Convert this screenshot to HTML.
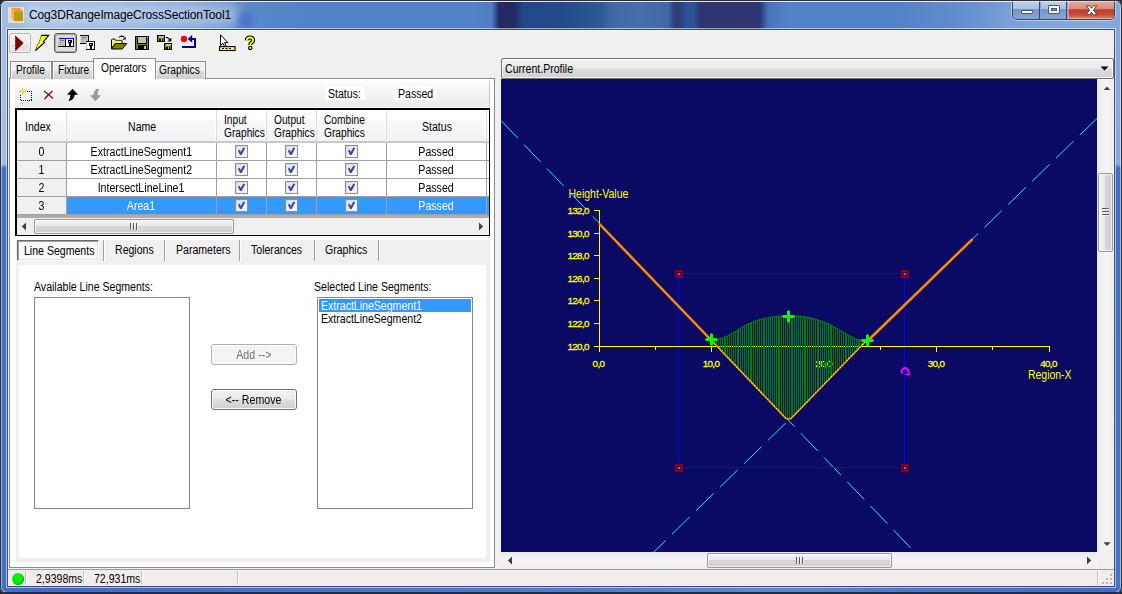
<!DOCTYPE html>
<html>
<head>
<meta charset="utf-8">
<title>Cog3DRangeImageCrossSectionTool1</title>
<style>
*{box-sizing:border-box;margin:0;padding:0}
html,body{width:1122px;height:594px;overflow:hidden}
body{position:relative;font-family:"Liberation Sans",sans-serif;font-size:11px;color:#000;background:#25272c}
.abs{position:absolute}
.t{position:absolute;white-space:nowrap;line-height:13px;font-size:12px;transform:translateY(1px) scaleX(.88);transform-origin:0 50%}
.t.n{transform:translateY(1px) scaleX(.85)}
.s{display:inline-block;font-size:12px;transform:scaleX(.885);transform-origin:50% 50%;white-space:nowrap}
#frame{left:0;top:0;width:1122px;height:594px;border-radius:7px;overflow:hidden;background:#4377c3}
#titlebar{left:0;top:0;width:1122px;height:30px}
#client{left:8px;top:30px;width:1106px;height:556px;background:#f0f0f0}
.tab{position:absolute;border:1px solid #898c95;border-bottom:none;background:linear-gradient(#f2f2f2 0%,#ebebeb 50%,#dddddd 51%,#cfcfcf 100%);box-shadow:inset 1px 1px 0 rgba(255,255,255,.8),inset -1px 0 0 rgba(255,255,255,.8);height:18px;top:61px}
.tab.sel{background:#fff;top:58px;height:21px;z-index:3;box-shadow:none}
.hc{position:absolute;top:110px;height:33px;background:linear-gradient(#ffffff 0%,#ffffff 30%,#f7f8fa 33%,#f1f2f5 100%);border-right:1px solid #dcdde0;border-bottom:2px solid #c9c9c9;box-shadow:inset -1px 0 0 #fff}
.cell{position:absolute;height:18px;border-right:1px solid #a0a0a0;border-bottom:1px solid #a0a0a0;background:#fff;text-align:center;line-height:18px;white-space:nowrap}
.cell.rh{background:#f0f0f0}
.cell.sel{background:#3399ff;color:#fff}
.cb{position:absolute;width:13px;height:13px;border:1px solid #8e8f8f;background:linear-gradient(135deg,#ccd1db 0%,#e4e7ec 50%,#f8f9fa 100%)}
.cb:before{content:"";position:absolute;left:1px;top:1px;right:1px;bottom:1px;border:1px solid rgba(255,255,255,.55)}
.lb{position:absolute;border:1px solid #828790;background:#fff}
.btn{position:absolute;border:1px solid #707070;border-radius:3px;background:linear-gradient(#f2f2f2 0%,#ebebeb 48%,#dddddd 52%,#cfcfcf 100%);box-shadow:inset 0 0 0 1px #fcfcfc;text-align:center;line-height:19px;white-space:nowrap}
.sep{position:absolute;width:1px;background:#a0a0a0;box-shadow:1px 0 0 #fff}
</style>
</head>
<body>
<div id="frame" class="abs">
<div id="titlebar" class="abs">
<div class="abs" style="left:0;top:0;width:1122px;height:30px;background:linear-gradient(90deg,#a4bfe4 0px,#9dbae2 20px,#8fb0de 120px,#7a9fd8 200px,#5a88cc 245px,#5482c8 300px,#5482c8 470px,#4f7cc2 492px,#232a63 499px,#222a64 514px,#23478a 524px,#234a8b 560px,#2d5893 600px,#4169a8 612px,#456eac 640px,#4169a8 668px,#333f7d 674px,#2f3c7a 680px,#2a5297 686px,#2a5297 694px,#2e3570 700px,#2e3570 760px,#4873ba 768px,#5482c8 790px,#5482c8 900px,#628dcf 960px,#7a9fd8 1010px,#84a6da 1060px,#86a7da 1122px)"></div>
<div class="abs" style="left:0;top:0;width:1122px;height:1px;background:#2b2f3a"></div>
<div class="abs" style="left:1px;top:1px;width:1120px;height:1px;background:rgba(255,255,255,.75)"></div>
<div class="abs" style="left:20px;top:4px;width:220px;height:22px;border-radius:11px;background:rgba(255,255,255,.36);filter:blur(6px)"></div>
<div class="abs" style="left:238px;top:12px;width:14px;height:16px;border-radius:7px;background:rgba(58,92,200,.55);filter:blur(3px)"></div>
<svg class="abs" style="left:8px;top:7px" width="16" height="16" viewBox="0 0 16 16"><rect width="16" height="16" fill="#e2ded9"/><polygon points="3,1 12,1 15,4.3 6,4.3" fill="#ff9a28"/><polygon points="3,1 6,4.3 6,14 3,11" fill="#ffb45a"/><rect x="6" y="4.3" width="9" height="9.7" fill="#e8820c"/><polyline points="6.3,12.6 9.6,6.6 13.5,6.6 13.5,12.6 15.2,12.6" fill="none" stroke="#10f020" stroke-width="1.3"/></svg>
<div class="t" style="left:29px;top:7px;font-size:12px;line-height:16px;letter-spacing:-0.13px;color:#000;transform:none" id="ttl">Cog3DRangeImageCrossSectionTool1</div>
<div class="abs" style="left:1012px;top:0;width:103px;height:20px;border:1px solid #3a4660;border-top:none;border-radius:0 0 5px 5px;overflow:hidden;box-shadow:0 0 0 1px rgba(255,255,255,.45)">
 <div class="abs" style="left:0;top:0;width:27px;height:19px;background:linear-gradient(#c3d4ec 0%,#a9c0e2 45%,#7395c9 50%,#86a6d6 100%);border-right:1px solid #3a4660"></div>
 <div class="abs" style="left:28px;top:0;width:26px;height:19px;background:linear-gradient(#c3d4ec 0%,#a9c0e2 45%,#7395c9 50%,#86a6d6 100%);border-right:1px solid #3a4660"></div>
 <div class="abs" style="left:55px;top:0;width:47px;height:19px;background:linear-gradient(#e8b0a6 0%,#d98c7e 45%,#c43c26 52%,#c64a34 75%,#d48874 100%);box-shadow:inset 0 0 0 1px rgba(255,255,255,.35)"></div>
 <div class="abs" style="left:8px;top:10px;width:12px;height:4px;background:#fff;border:1px solid #4a5570;border-radius:1px"></div>
 <div class="abs" style="left:35px;top:5px;width:12px;height:9px;background:#fff;border:1px solid #4a5570;border-radius:1px"></div>
 <div class="abs" style="left:38px;top:8px;width:6px;height:3px;background:#7f9dcc;border:1px solid #4a5570"></div>
 <svg class="abs" style="left:72px;top:5px" width="13" height="11" viewBox="0 0 13 11"><path d="M1.2,0.8 L4.6,0.8 L6.5,3.2 L8.4,0.8 L11.8,0.8 L8.4,5.2 L12,9.8 L8.4,9.8 L6.5,7.2 L4.6,9.8 L1,9.8 L4.6,5.2 Z" fill="#fff" stroke="#4a4050" stroke-width="1"/></svg>
</div>
</div>
<div id="client" class="abs"></div>
<div class="abs" style="left:9px;top:33px;width:22px;height:20px;border:1px solid #b4b4b4;border-radius:3px;background:linear-gradient(#f4f4f4 0%,#ececec 58%,#dfdfdf 62%,#e6e6e6 100%);box-shadow:inset 0 0 0 1px rgba(255,255,255,.6)"></div>
<svg class="abs" style="left:14px;top:35px" width="10" height="17" viewBox="0 0 10 17"><polygon points="1,0.2 9.3,7.7 1,15.8" fill="#800000"/><line x1="1" y1="0" x2="1" y2="16" stroke="#e8c0c0" stroke-width="1" stroke-dasharray="1 1"/><line x1="9.3" y1="8" x2="1.2" y2="16" stroke="#200000" stroke-width="0.9"/></svg>
<svg class="abs" style="left:34px;top:34px" width="16" height="18" viewBox="0 0 16 18"><polygon points="7.4,1.3 14.6,1.3 9.6,7.6 10.6,8.4 1.4,16.6 3.6,10.2 4.8,9.6" fill="#ffff00"/><path d="M7.4,1.3 H14.6 L9.6,7.6 L10.6,8.4 L1.4,16.6" fill="none" stroke="#000" stroke-width="1.2"/><path d="M1.4,16.6 L3.6,10.2 L4.8,9.6 L7.4,1.3" fill="none" stroke="#000" stroke-width="0.9" stroke-dasharray="1.2 1"/></svg>
<div class="abs" style="left:54px;top:33px;width:23px;height:20px;border:1px solid #5c5c5c;border-radius:3px;background:linear-gradient(#d6d6d6 0%,#dcdcdc 50%,#d8d8d8 55%,#e4e4e4 100%);box-shadow:inset 0 0 0 1px #a8a8a8"></div>
<svg class="abs" style="left:58px;top:38px" width="16" height="10" viewBox="0 0 16 10" shape-rendering="crispEdges"><rect x="1" y="1" width="14" height="7" fill="#fff"/><rect x="1" y="1" width="6" height="7" fill="#c0c0c0"/><rect x="1" y="0" width="7" height="1" fill="#000080"/><rect x="8" y="0" width="7" height="1" fill="#0000ff"/><rect x="0" y="1" width="1" height="7" fill="#d0d0d0"/><rect x="0" y="8" width="16" height="1" fill="#000"/><rect x="15" y="0" width="1" height="9" fill="#000"/><rect x="7" y="1" width="1" height="8" fill="#000"/><rect x="2" y="2" width="4" height="1" fill="#808080"/><rect x="2" y="4" width="1" height="1" fill="#808080"/><rect x="2" y="6" width="1" height="1" fill="#808080"/><rect x="10" y="2" width="4" height="3" fill="#000"/><rect x="11" y="5" width="2" height="3" fill="#000"/><rect x="11" y="3" width="1" height="1" fill="#fff"/></svg>
<svg class="abs" style="left:80px;top:35px" width="16" height="16" viewBox="0 0 16 16" shape-rendering="crispEdges"><rect x="1" y="1" width="7" height="7" fill="#c0c0c0"/><rect x="0" y="0" width="8" height="1" fill="#000080"/><rect x="0" y="1" width="1" height="7" fill="#d8d8d8"/><rect x="8" y="0" width="1" height="9" fill="#000"/><rect x="0" y="8" width="9" height="1" fill="#000"/><rect x="2" y="2" width="4" height="1" fill="#808080"/><rect x="2" y="4" width="1" height="1" fill="#808080"/><rect x="2" y="6" width="1" height="1" fill="#808080"/><rect x="6" y="6" width="9" height="9" fill="#fff"/><rect x="6" y="6" width="9" height="1" fill="#0000ff"/><rect x="6" y="7" width="1" height="7" fill="#c0c0c0"/><rect x="14" y="6" width="1" height="9" fill="#000"/><rect x="6" y="14" width="9" height="1" fill="#000"/><rect x="9" y="8" width="4" height="3" fill="#000"/><rect x="10" y="11" width="2" height="3" fill="#000"/><rect x="10" y="9" width="1" height="1" fill="#fff"/></svg>
<svg class="abs" style="left:110px;top:34px" width="18" height="16" viewBox="0 0 18 16"><path d="M9,3.4 Q11.5,0.8 14.2,3.2" fill="none" stroke="#000" stroke-width="1.1"/><polygon points="12.6,5.8 15.8,5.6 15.4,2.4" fill="#000"/><polygon points="1.5,15 1.5,5.8 2.3,5 4.8,5 5.6,6.4 12,6.4 12,9.5 5,9.5" fill="#f4f4a0" stroke="#000" stroke-width="1" stroke-linejoin="round"/><path d="M2.5,7 h9 M2.5,8.5 h3 M2.5,10 h2 M2.5,11.5 h1.2" stroke="#e8e800" stroke-width="1" stroke-dasharray="1 1"/><polygon points="1.5,15 5.5,9.5 16.8,9.5 12.3,15" fill="#808000" stroke="#000" stroke-width="1" stroke-linejoin="round"/></svg>
<svg class="abs" style="left:135px;top:36px" width="14" height="14" viewBox="0 0 14 14" shape-rendering="crispEdges"><rect x="0" y="0" width="14" height="14" fill="#000"/><rect x="1" y="1" width="12" height="12" fill="#808000"/><rect x="3" y="1" width="8" height="6" fill="#c0c0c0"/><rect x="2" y="1" width="1" height="7" fill="#000"/><rect x="11" y="1" width="1" height="7" fill="#000"/><rect x="3" y="7" width="8" height="1" fill="#000"/><rect x="12" y="1" width="1" height="1" fill="#e0e0e0"/><rect x="3" y="9" width="9" height="4" fill="#000"/><rect x="9" y="10" width="2" height="3" fill="#c0c0c0"/></svg>
<svg class="abs" style="left:156px;top:34px" width="17" height="17" viewBox="0 0 17 17" shape-rendering="crispEdges"><rect x="1" y="1" width="8" height="7" fill="#000"/><rect x="2" y="2" width="6" height="5" fill="#808000"/><rect x="3" y="2" width="4" height="2" fill="#c0c0c0"/><rect x="7" y="2" width="1" height="1" fill="#e0e0e0"/><rect x="3" y="5" width="4" height="2" fill="#000"/><rect x="5" y="5" width="1" height="2" fill="#c0c0c0"/><rect x="8" y="9" width="8" height="7" fill="#000"/><rect x="9" y="10" width="6" height="5" fill="#808000"/><rect x="10" y="10" width="4" height="2" fill="#c0c0c0"/><rect x="14" y="10" width="1" height="1" fill="#e0e0e0"/><rect x="10" y="13" width="4" height="2" fill="#000"/><rect x="12" y="13" width="1" height="2" fill="#c0c0c0"/><path d="M10,3.5 h1.5 l3,3 M14.8,4 v3 h-3" fill="none" stroke="#000" stroke-width="1.1" shape-rendering="auto"/></svg>
<svg class="abs" style="left:180px;top:34px" width="18" height="17" viewBox="0 0 18 17"><circle cx="4" cy="5" r="3.15" fill="#ff0000"/><polygon points="7.8,5 12.2,0.8 12.2,8.8" fill="#000090"/><path d="M12,5 H15 V13 H2" fill="none" stroke="#000090" stroke-width="2"/></svg>
<svg class="abs" style="left:218px;top:34px" width="18" height="18" viewBox="0 0 18 18"><polygon points="2.5,0.8 2.5,11.5 5,9.3 6.8,13 8.3,12.3 6.6,8.7 9.8,8.5" fill="#fff" stroke="#000" stroke-width="1"/><rect x="1.5" y="12.6" width="15.5" height="3.9" fill="#ffff00" stroke="#000" stroke-width="1.1"/><path d="M4,14.5 h2 M7.5,14.5 h2 M11,14.5 h2" stroke="#000" stroke-width="1"/></svg>
<svg class="abs" style="left:244px;top:35px" width="12" height="16" viewBox="0 0 13 18"><path d="M3,6 Q3,2.8 6.5,2.8 Q10,2.8 10,5.8 Q10,7.6 8,8.6 Q6.8,9.3 6.8,11.2" fill="none" stroke="#000" stroke-width="4.6" stroke-linecap="butt"/><path d="M3,6 Q3,2.8 6.5,2.8 Q10,2.8 10,5.8 Q10,7.6 8,8.6 Q6.8,9.3 6.8,11.2" fill="none" stroke="#ffff00" stroke-width="2"/><circle cx="6.8" cy="14.6" r="1.9" fill="#ffff00" stroke="#000" stroke-width="1.3"/></svg>
<div class="abs" style="left:9px;top:78px;width:486px;height:490px;border:1px solid #898c95;background:#fff"></div>
<div class="tab" style="left:10px;width:42px"></div><div class="t n" style="left:16px;top:63px">Profile</div>
<div class="tab" style="left:52px;width:42px"></div><div class="t n" style="left:58px;top:63px">Fixture</div>
<div class="tab" style="left:155px;width:51px"></div><div class="t n" style="left:159px;top:63px">Graphics</div>
<div class="tab sel" style="left:93px;width:63px"></div><div class="t n" style="left:101px;top:61px;z-index:4">Operators</div>
<div class="abs" style="left:15px;top:81px;width:475px;height:26px;border-radius:3px 0 0 0;background:linear-gradient(#fdfdfd 0%,#f4f4f4 40%,#ebebeb 100%);border-right:1px solid #c8c8c8"></div>
<svg class="abs" style="left:19px;top:88px" width="15" height="14" viewBox="0 0 15 14" shape-rendering="crispEdges"><path d="M1.5,3.5 H12.5 V12.5 H1.5 Z" fill="none" stroke="#000" stroke-width="1" stroke-dasharray="1 1"/><rect x="0" y="1" width="6" height="5" fill="#f6f6f6"/><path d="M1,1.5 l4,4 M5,1.5 l-4,4 M3.5,0 v7 M0,3.5 h7" stroke="#d8d800" stroke-width="1" shape-rendering="auto"/><rect x="3" y="3" width="1" height="1" fill="#fff"/></svg>
<svg class="abs" style="left:43px;top:90px" width="11" height="10" viewBox="0 0 11 10"><path d="M1,1 Q5,4 10,8.5 M9.5,1 Q5,5 1.5,9" fill="none" stroke="#8b1414" stroke-width="1.5"/></svg>
<svg class="abs" style="left:66px;top:88px" width="13" height="14" viewBox="0 0 13 14"><path d="M6.5,0.8 L12,6.8 L8.6,6.8 Q8.6,11 4,12.8 L2.5,12.8 Q4.6,10 4.4,6.8 L1,6.8 Z" fill="#000"/></svg>
<svg class="abs" style="left:89px;top:88px" width="13" height="14" viewBox="0 0 13 14"><path d="M6.5,13.2 L12,7.2 L8.6,7.2 Q8.6,3 10.2,1 L7.5,1 Q4.4,3.4 4.4,7.2 L1,7.2 Z" fill="#9a9a9a"/></svg>
<div class="abs" style="left:325px;top:87px;width:40px;height:13px;background:#fff"></div><div class="t" style="left:328px;top:87px">Status:</div>
<div class="abs" style="left:395px;top:87px;width:42px;height:13px;background:#fff"></div><div class="t" style="left:398px;top:87px">Passed</div>
<div class="abs" style="left:15px;top:108px;width:475px;height:128px;border:solid #000;border-width:2px 1px 1px 2px;background:#ababab"></div>
<div class="hc" style="left:17px;width:50px"></div>
<div class="hc" style="left:67px;width:150px"></div>
<div class="hc" style="left:217px;width:50px"></div>
<div class="hc" style="left:267px;width:50px"></div>
<div class="hc" style="left:317px;width:70px"></div>
<div class="hc" style="left:387px;width:100px"></div>
<div class="hc" style="left:487px;width:2px;border-right:none"></div>
<div class="t" style="left:25px;top:120px">Index</div>
<div class="t" style="left:128px;top:120px">Name</div>
<div class="t n" style="left:224px;top:113px">Input<br>Graphics</div>
<div class="t n" style="left:274px;top:113px">Output<br>Graphics</div>
<div class="t n" style="left:323.5px;top:113px">Combine<br>Graphics</div>
<div class="t" style="left:422px;top:120px">Status</div>
<div class="cell rh" style="left:17px;top:143px;width:50px"><span class="s">0</span></div>
<div class="cell" style="left:67px;top:143px;width:150px"><span class="s">ExtractLineSegment1</span></div>
<div class="cell" style="left:217px;top:143px;width:50px"></div>
<div class="cb" style="left:235px;top:145px"></div><svg class="abs" style="left:237px;top:147px" width="9" height="9" viewBox="0 0 9 9"><path d="M0.8,3.6 L3.1,8 L4.6,8 L8.3,0.9 L6.4,0.4 L3.8,5 L2.7,2.9 Z" fill="#3848a0"/></svg>
<div class="cell" style="left:267px;top:143px;width:50px"></div>
<div class="cb" style="left:285px;top:145px"></div><svg class="abs" style="left:287px;top:147px" width="9" height="9" viewBox="0 0 9 9"><path d="M0.8,3.6 L3.1,8 L4.6,8 L8.3,0.9 L6.4,0.4 L3.8,5 L2.7,2.9 Z" fill="#3848a0"/></svg>
<div class="cell" style="left:317px;top:143px;width:70px"></div>
<div class="cb" style="left:345px;top:145px"></div><svg class="abs" style="left:347px;top:147px" width="9" height="9" viewBox="0 0 9 9"><path d="M0.8,3.6 L3.1,8 L4.6,8 L8.3,0.9 L6.4,0.4 L3.8,5 L2.7,2.9 Z" fill="#3848a0"/></svg>
<div class="cell" style="left:387px;top:143px;width:100px"><span class="s">Passed</span></div>
<div class="cell" style="left:487px;top:143px;width:2px;border-right:none"></div>
<div class="cell rh" style="left:17px;top:161px;width:50px"><span class="s">1</span></div>
<div class="cell" style="left:67px;top:161px;width:150px"><span class="s">ExtractLineSegment2</span></div>
<div class="cell" style="left:217px;top:161px;width:50px"></div>
<div class="cb" style="left:235px;top:163px"></div><svg class="abs" style="left:237px;top:165px" width="9" height="9" viewBox="0 0 9 9"><path d="M0.8,3.6 L3.1,8 L4.6,8 L8.3,0.9 L6.4,0.4 L3.8,5 L2.7,2.9 Z" fill="#3848a0"/></svg>
<div class="cell" style="left:267px;top:161px;width:50px"></div>
<div class="cb" style="left:285px;top:163px"></div><svg class="abs" style="left:287px;top:165px" width="9" height="9" viewBox="0 0 9 9"><path d="M0.8,3.6 L3.1,8 L4.6,8 L8.3,0.9 L6.4,0.4 L3.8,5 L2.7,2.9 Z" fill="#3848a0"/></svg>
<div class="cell" style="left:317px;top:161px;width:70px"></div>
<div class="cb" style="left:345px;top:163px"></div><svg class="abs" style="left:347px;top:165px" width="9" height="9" viewBox="0 0 9 9"><path d="M0.8,3.6 L3.1,8 L4.6,8 L8.3,0.9 L6.4,0.4 L3.8,5 L2.7,2.9 Z" fill="#3848a0"/></svg>
<div class="cell" style="left:387px;top:161px;width:100px"><span class="s">Passed</span></div>
<div class="cell" style="left:487px;top:161px;width:2px;border-right:none"></div>
<div class="cell rh" style="left:17px;top:179px;width:50px"><span class="s">2</span></div>
<div class="cell" style="left:67px;top:179px;width:150px"><span class="s">IntersectLineLine1</span></div>
<div class="cell" style="left:217px;top:179px;width:50px"></div>
<div class="cb" style="left:235px;top:181px"></div><svg class="abs" style="left:237px;top:183px" width="9" height="9" viewBox="0 0 9 9"><path d="M0.8,3.6 L3.1,8 L4.6,8 L8.3,0.9 L6.4,0.4 L3.8,5 L2.7,2.9 Z" fill="#3848a0"/></svg>
<div class="cell" style="left:267px;top:179px;width:50px"></div>
<div class="cb" style="left:285px;top:181px"></div><svg class="abs" style="left:287px;top:183px" width="9" height="9" viewBox="0 0 9 9"><path d="M0.8,3.6 L3.1,8 L4.6,8 L8.3,0.9 L6.4,0.4 L3.8,5 L2.7,2.9 Z" fill="#3848a0"/></svg>
<div class="cell" style="left:317px;top:179px;width:70px"></div>
<div class="cb" style="left:345px;top:181px"></div><svg class="abs" style="left:347px;top:183px" width="9" height="9" viewBox="0 0 9 9"><path d="M0.8,3.6 L3.1,8 L4.6,8 L8.3,0.9 L6.4,0.4 L3.8,5 L2.7,2.9 Z" fill="#3848a0"/></svg>
<div class="cell" style="left:387px;top:179px;width:100px"><span class="s">Passed</span></div>
<div class="cell" style="left:487px;top:179px;width:2px;border-right:none"></div>
<div class="cell rh" style="left:17px;top:197px;width:50px"><span class="s">3</span></div>
<div class="cell sel" style="left:67px;top:197px;width:150px"><span class="s">Area1</span></div>
<div class="cell sel" style="left:217px;top:197px;width:50px"></div>
<div class="cb" style="left:235px;top:199px"></div><svg class="abs" style="left:237px;top:201px" width="9" height="9" viewBox="0 0 9 9"><path d="M0.8,3.6 L3.1,8 L4.6,8 L8.3,0.9 L6.4,0.4 L3.8,5 L2.7,2.9 Z" fill="#3848a0"/></svg>
<div class="cell sel" style="left:267px;top:197px;width:50px"></div>
<div class="cb" style="left:285px;top:199px"></div><svg class="abs" style="left:287px;top:201px" width="9" height="9" viewBox="0 0 9 9"><path d="M0.8,3.6 L3.1,8 L4.6,8 L8.3,0.9 L6.4,0.4 L3.8,5 L2.7,2.9 Z" fill="#3848a0"/></svg>
<div class="cell sel" style="left:317px;top:197px;width:70px"></div>
<div class="cb" style="left:345px;top:199px"></div><svg class="abs" style="left:347px;top:201px" width="9" height="9" viewBox="0 0 9 9"><path d="M0.8,3.6 L3.1,8 L4.6,8 L8.3,0.9 L6.4,0.4 L3.8,5 L2.7,2.9 Z" fill="#3848a0"/></svg>
<div class="cell sel" style="left:387px;top:197px;width:100px"><span class="s">Passed</span></div>
<div class="cell sel" style="left:487px;top:197px;width:2px;border-right:none"></div>
<div class="abs" style="left:17px;top:218px;width:472px;height:17px;background:#f0f0f0"></div>
<div class="abs" style="left:34px;top:219px;width:200px;height:15px;border:1px solid #979797;border-radius:2px;background:linear-gradient(#f3f3f3 0%,#e9e9eb 45%,#d7d7d9 50%,#d0d0d2 100%);box-shadow:inset 0 0 0 1px rgba(255,255,255,.7)"></div>
<div class="abs" style="left:129.5px;top:223px;width:1.3px;height:7px;background:linear-gradient(#3a3a3a,#7a7a7a);box-shadow:3px 0 0 #5a5a5a,6px 0 0 #5a5a5a,1px 0 0 #f4f4f4,4px 0 0 #f4f4f4,7px 0 0 #f4f4f4"></div>
<svg class="abs" style="left:21px;top:222px" width="6" height="9" viewBox="0 0 6 9"><polygon points="5,0.5 5,8.5 0.8,4.5" fill="#404040"/></svg>
<svg class="abs" style="left:478px;top:222px" width="6" height="9" viewBox="0 0 6 9"><polygon points="1,0.5 1,8.5 5.2,4.5" fill="#404040"/></svg>
<div class="abs" style="left:16px;top:240px;width:474px;height:322px;background:#f0f0f0"></div>
<div class="abs" style="left:19px;top:265px;width:467px;height:293px;background:#fff"></div>
<div class="abs" style="left:17px;top:240px;width:82px;height:21px;border:1px solid;border-color:#696969 #fff #fff #696969;background:#f8f8f8;box-shadow:inset 1px 1px 0 #a0a0a0,inset -1px -1px 0 #e3e3e3"></div>
<div class="sep" style="left:103px;top:240px;height:21px"></div>
<div class="sep" style="left:164px;top:240px;height:21px"></div>
<div class="sep" style="left:239px;top:240px;height:21px"></div>
<div class="sep" style="left:314px;top:240px;height:21px"></div>
<div class="sep" style="left:378px;top:240px;height:21px"></div>
<div class="t" style="left:24px;top:244px">Line Segments</div>
<div class="t" style="left:115px;top:243px">Regions</div>
<div class="t" style="left:176px;top:243px">Parameters</div>
<div class="t" style="left:251px;top:243px">Tolerances</div>
<div class="t" style="left:325px;top:243px">Graphics</div>
<div class="t" style="left:34px;top:280px">Available Line Segments:</div>
<div class="t" style="left:314px;top:280px">Selected Line Segments:</div>
<div class="lb" style="left:34px;top:297px;width:156px;height:212px"></div>
<div class="lb" style="left:317px;top:297px;width:156px;height:212px"></div>
<div class="abs" style="left:319px;top:299px;width:152px;height:13px;background:#3399ff"></div>
<div class="t" style="left:321px;top:299px;color:#fff">ExtractLineSegment1</div>
<div class="t" style="left:321px;top:312px">ExtractLineSegment2</div>
<div class="btn" style="left:211px;top:344px;width:86px;height:21px;border-color:#adb2b5;background:#f4f4f4;color:#707070;padding-top:1px"><span class="s">Add --&gt;</span></div>
<div class="btn" style="left:211px;top:389px;width:86px;height:21px;padding-top:1px"><span class="s">&lt;-- Remove</span></div>
<div class="abs" style="left:501px;top:58px;width:613px;height:21px;border:1px solid #707070;border-radius:2px;background:linear-gradient(#f2f2f2 0%,#ebebeb 48%,#dddddd 52%,#cfcfcf 100%);box-shadow:inset 0 0 0 1px rgba(255,255,255,.8)"></div>
<div class="t" style="left:505px;top:62px">Current.Profile</div>
<svg class="abs" style="left:1100px;top:66px" width="9" height="5" viewBox="0 0 9 5"><polygon points="0.5,0.5 8.5,0.5 4.5,4.5" fill="#000"/></svg>
<svg class="abs" style="left:501px;top:79px" width="596" height="473" viewBox="501 79 596 473">
<defs><pattern id="hatch" patternUnits="userSpaceOnUse" x="713" y="0" width="1.56" height="8"><rect x="0" y="0" width="1" height="8" fill="#008000" shape-rendering="crispEdges"/></pattern></defs>
<rect x="501" y="78" width="596" height="474" fill="#0a0a64"/>
<g stroke="#10e8ff" stroke-width="1" fill="none">
<path d="M501,120.5 L599,222.8" stroke-dasharray="24.2 9"/>
<path d="M788.4,420.3 L916,553.5" stroke-dasharray="24.6 9" stroke-dashoffset="15.8"/>
<path d="M1097.5,118 L972,239.5" stroke-dasharray="24.5 8.75"/>
<path d="M785.7,423 L650,555.7" stroke-dasharray="24.6 9"/>
</g>
<rect x="678.5" y="273.5" width="226" height="194" fill="none" stroke="#0000ff" stroke-width="1"/>
<g stroke="#ffff00" stroke-width="1" fill="none" shape-rendering="crispEdges">
<path d="M599.5,210 V347"/><path d="M599,346.5 H1050"/>
<path d="M594,346.5 H600"/>
<path d="M594,323.5 H600"/>
<path d="M594,300.5 H600"/>
<path d="M594,278.5 H600"/>
<path d="M594,255.5 H600"/>
<path d="M594,233.5 H600"/>
<path d="M594,210.5 H600"/>
<path d="M599.5,346 V352"/>
<path d="M655.5,346 V350"/>
<path d="M711.5,346 V352"/>
<path d="M880.5,346 V350"/>
<path d="M936.5,346 V352"/>
<path d="M992.5,346 V350"/>
<path d="M1049.5,346 V352"/>
</g>
<g font-family="Liberation Sans, sans-serif" fill="#ffff00" stroke="#ffff00" stroke-width="0.3">
<text transform="translate(568.5,197.8) scale(0.875,1)" font-size="12" stroke="none">Height-Value</text>
<text transform="translate(1028,379) scale(0.87,1)" font-size="12" stroke="none">Region-X</text>
<text x="589" y="350.0" font-size="9.8" text-anchor="end" letter-spacing="-0.58">120,0</text>
<text x="589" y="327.0" font-size="9.8" text-anchor="end" letter-spacing="-0.58">122,0</text>
<text x="589" y="304.0" font-size="9.8" text-anchor="end" letter-spacing="-0.58">124,0</text>
<text x="589" y="282.0" font-size="9.8" text-anchor="end" letter-spacing="-0.58">126,0</text>
<text x="589" y="259.0" font-size="9.8" text-anchor="end" letter-spacing="-0.58">128,0</text>
<text x="589" y="237.0" font-size="9.8" text-anchor="end" letter-spacing="-0.58">130,0</text>
<text x="589" y="214.0" font-size="9.8" text-anchor="end" letter-spacing="-0.58">132,0</text>
<text x="598.5" y="366.5" font-size="9.8" text-anchor="middle" letter-spacing="-0.58">0,0</text>
<text x="711.0" y="366.5" font-size="9.8" text-anchor="middle" letter-spacing="-0.58">10,0</text>
<text x="823.5" y="366.5" font-size="9.8" text-anchor="middle" letter-spacing="-0.58">20,0</text>
<text x="936.0" y="366.5" font-size="9.8" text-anchor="middle" letter-spacing="-0.58">30,0</text>
<text x="1048.5" y="366.5" font-size="9.8" text-anchor="middle" letter-spacing="-0.58">40,0</text>
</g>
<clipPath id="areaclip"><polygon points="712.5,339.8 718,339.3 723.75,337.8 728,335.8 733.75,332.5 738,330 742.5,327 750,323.3 757.5,320.4 764,318.5 770,317.3 780,316.2 788.75,316 796,316.1 802.5,316.6 809,317.6 815,319 821,321 827.5,323.6 834,327 840,330.5 845,333.5 850,336.2 855,338.8 858,339.6 866,340 866,342 793,417 790,419.5 788.5,420.3 787,419.5 784,417 712,342"/></clipPath>
<path d="M712.5,314V422M714.5,314V422M716.5,314V422M718.5,314V422M720.5,314V422M722.5,314V422M724.5,314V422M725.5,314V422M727.5,314V422M729.5,314V422M731.5,314V422M733.5,314V422M735.5,314V422M737.5,314V422M738.5,314V422M740.5,314V422M742.5,314V422M744.5,314V422M746.5,314V422M748.5,314V422M750.5,314V422M751.5,314V422M753.5,314V422M755.5,314V422M757.5,314V422M759.5,314V422M761.5,314V422M763.5,314V422M764.5,314V422M766.5,314V422M768.5,314V422M770.5,314V422M772.5,314V422M774.5,314V422M776.5,314V422M778.5,314V422M779.5,314V422M781.5,314V422M783.5,314V422M785.5,314V422M787.5,314V422M789.5,314V422M791.5,314V422M792.5,314V422M794.5,314V422M796.5,314V422M798.5,314V422M800.5,314V422M802.5,314V422M804.5,314V422M805.5,314V422M807.5,314V422M809.5,314V422M811.5,314V422M813.5,314V422M815.5,314V422M817.5,314V422M818.5,314V422M820.5,314V422M822.5,314V422M824.5,314V422M826.5,314V422M828.5,314V422M830.5,314V422M831.5,314V422M833.5,314V422M835.5,314V422M837.5,314V422M839.5,314V422M841.5,314V422M843.5,314V422M845.5,314V422M846.5,314V422M848.5,314V422M850.5,314V422M852.5,314V422M854.5,314V422M856.5,314V422M858.5,314V422M859.5,314V422M861.5,314V422M863.5,314V422M865.5,314V422" stroke="#008000" stroke-width="1" fill="none" shape-rendering="crispEdges" clip-path="url(#areaclip)"/>
<polyline points="712.5,339.8 718,339.3 723.75,337.8 728,335.8 733.75,332.5 738,330 742.5,327 750,323.3 757.5,320.4 764,318.5 770,317.3 780,316.2 788.75,316 796,316.1 802.5,316.6 809,317.6 815,319 821,321 827.5,323.6 834,327 840,330.5 845,333.5 850,336.2 855,338.8 858,339.6 866,340" fill="none" stroke="#008000" stroke-width="1.2"/>
<path d="M712,341 L785,417.5 Q788.5,421 792,417.5 L866,341" fill="none" stroke="#ff8a00" stroke-width="1.6"/>
<path d="M712,341 L785,417.5 Q788.5,421 792,417.5 L866,341" fill="none" stroke="#e8e800" stroke-width="1.2" stroke-dasharray="1.4 1.8"/>
<path d="M599.5,224 L712,341" stroke="#ff8a00" stroke-width="2.5" fill="none" stroke-linecap="round"/>
<path d="M867,341.5 L971.8,239.8" stroke="#ff8a00" stroke-width="2.5" fill="none" stroke-linecap="round"/>
<polygon points="704.9,339.5 706.3,338.0 716.7,338.0 718.1,339.5 716.7,341.0 706.3,341.0" fill="#00ff00"/><polygon points="711.5,332.9 713.0,334.3 713.0,344.7 711.5,346.1 710.0,344.7 710.0,334.3" fill="#00ff00"/>
<polygon points="781.9,316.5 783.3,315.0 793.7,315.0 795.1,316.5 793.7,318.0 783.3,318.0" fill="#00ff00"/><polygon points="788.5,309.9 790.0,311.3 790.0,321.7 788.5,323.1 787.0,321.7 787.0,311.3" fill="#00ff00"/>
<polygon points="860.9,340.5 862.3,339.0 872.7,339.0 874.1,340.5 872.7,342.0 862.3,342.0" fill="#00ff00"/><polygon points="867.5,333.9 869.0,335.3 869.0,345.7 867.5,347.1 866.0,345.7 866.0,335.3" fill="#00ff00"/>
<rect x="676.0" y="271.0" width="6" height="6" fill="none" stroke="#8b0000" stroke-width="2" shape-rendering="crispEdges"/><rect x="678.0" y="273.0" width="2" height="2" fill="#ff10ff" shape-rendering="crispEdges"/>
<rect x="902.0" y="271.0" width="6" height="6" fill="none" stroke="#8b0000" stroke-width="2" shape-rendering="crispEdges"/><rect x="904.0" y="273.0" width="2" height="2" fill="#ff10ff" shape-rendering="crispEdges"/>
<rect x="676.0" y="465.0" width="6" height="6" fill="none" stroke="#8b0000" stroke-width="2" shape-rendering="crispEdges"/><rect x="678.0" y="467.0" width="2" height="2" fill="#ff10ff" shape-rendering="crispEdges"/>
<rect x="902.0" y="465.0" width="6" height="6" fill="none" stroke="#8b0000" stroke-width="2" shape-rendering="crispEdges"/><rect x="904.0" y="467.0" width="2" height="2" fill="#ff10ff" shape-rendering="crispEdges"/>
<path d="M902.6,373.6 A3.3,3.3 0 1 1 908,372.6" fill="none" stroke="#ff00ff" stroke-width="1.7"/><path d="M905.2,374.4 H909.2 V372.2" fill="none" stroke="#ff00ff" stroke-width="1.5"/>
</svg>
<div class="abs" style="left:1097px;top:79px;width:17px;height:473px;background:linear-gradient(90deg,#e8e8e8 0,#efefef 3px,#f4f4f4 9px,#efefef 17px)"></div>
<svg class="abs" style="left:1102.5px;top:85.5px" width="8" height="4.5" viewBox="0 0 9 5" preserveAspectRatio="none"><polygon points="0.5,4.8 8.5,4.8 4.5,0.6" fill="#404040"/></svg>
<svg class="abs" style="left:1102.5px;top:542px" width="8" height="4.5" viewBox="0 0 9 5" preserveAspectRatio="none"><polygon points="0.5,0.2 8.5,0.2 4.5,4.4" fill="#404040"/></svg>
<div class="abs" style="left:1098px;top:173px;width:15px;height:79px;border:1px solid #979797;border-radius:2px;background:linear-gradient(90deg,#f3f3f3 0%,#e9e9eb 45%,#d7d7d9 50%,#d0d0d2 100%);box-shadow:inset 0 0 0 1px rgba(255,255,255,.7)"></div>
<div class="abs" style="left:1102px;top:207.7px;width:7px;height:1.3px;background:linear-gradient(90deg,#3a3a3a,#7a7a7a);box-shadow:0 3px 0 #5a5a5a,0 6px 0 #5a5a5a,0 1px 0 #f4f4f4,0 4px 0 #f4f4f4,0 7px 0 #f4f4f4"></div>
<div class="abs" style="left:501px;top:552px;width:613px;height:17px;background:linear-gradient(#e8e8e8 0,#efefef 3px,#f4f4f4 9px,#efefef 17px)"></div>
<div class="abs" style="left:1097px;top:552px;width:17px;height:17px;background:#f0f0f0"></div>
<svg class="abs" style="left:506.5px;top:556px" width="6" height="9" viewBox="0 0 6 9"><polygon points="5,0.5 5,8.5 0.8,4.5" fill="#404040"/></svg>
<svg class="abs" style="left:1086px;top:556px" width="6" height="9" viewBox="0 0 6 9"><polygon points="1,0.5 1,8.5 5.2,4.5" fill="#404040"/></svg>
<div class="abs" style="left:707px;top:553px;width:185px;height:15px;border:1px solid #979797;border-radius:2px;background:linear-gradient(#f3f3f3 0%,#e9e9eb 45%,#d7d7d9 50%,#d0d0d2 100%);box-shadow:inset 0 0 0 1px rgba(255,255,255,.7)"></div>
<div class="abs" style="left:795.5px;top:557px;width:1.3px;height:7px;background:linear-gradient(#3a3a3a,#7a7a7a);box-shadow:3px 0 0 #5a5a5a,6px 0 0 #5a5a5a,1px 0 0 #f4f4f4,4px 0 0 #f4f4f4,7px 0 0 #f4f4f4"></div>
<div class="abs" style="left:8px;top:569px;width:1106px;height:1px;background:#9b9b9b"></div>
<div class="abs" style="left:8px;top:570px;width:1106px;height:16px;background:#f1edec"></div>
<div class="abs" style="left:12px;top:573px;width:12px;height:12px;border-radius:6px;background:#00f000;box-shadow:inset -1px -1px 0 #00b800"></div>
<div class="t" style="left:36px;top:572px">2,9398ms</div>
<div class="t" style="left:94px;top:572px">72,931ms</div>
<div class="abs" style="left:25px;top:571px;width:1px;height:14px;background:#c8c4c3;box-shadow:1px 0 0 #fff"></div>
<div class="abs" style="left:83px;top:571px;width:1px;height:14px;background:#c8c4c3;box-shadow:1px 0 0 #fff"></div>
<div class="abs" style="left:141px;top:571px;width:1px;height:14px;background:#c8c4c3;box-shadow:1px 0 0 #fff"></div>
<div class="abs" style="left:237px;top:571px;width:1px;height:14px;background:#c8c4c3;box-shadow:1px 0 0 #fff"></div>
<div class="abs" style="left:1097px;top:571px;width:1px;height:14px;background:#c8c4c3;box-shadow:1px 0 0 #fff"></div>
<svg class="abs" style="left:1102px;top:574px" width="11" height="11" viewBox="0 0 11 11" shape-rendering="crispEdges"><g fill="#b8b4b3"><rect x="8" y="8" width="2" height="2"/><rect x="8" y="4" width="2" height="2"/><rect x="4" y="8" width="2" height="2"/><rect x="8" y="0" width="2" height="2"/><rect x="4" y="4" width="2" height="2"/><rect x="0" y="8" width="2" height="2"/></g></svg>
<div class="abs" style="left:0;top:30px;width:8px;height:564px;background:linear-gradient(#a4bfe4 0px,#a0bce3 134px,#3f70c1 138px,#3f70c1 564px)"></div>
<div class="abs" style="left:1114px;top:30px;width:8px;height:564px;background:linear-gradient(#86a7da 0px,#8aaadc 134px,#3f70c1 138px,#4377c6 564px)"></div>
<div class="abs" style="left:0;top:586px;width:1122px;height:8px;background:linear-gradient(90deg,#3f70c1 0px,#4a7cc8 500px,#5a8ad0 800px,#4a7cc8 900px,#3f70c1 1122px)"></div>
<div class="abs" style="left:7px;top:29px;width:1108px;height:558px;border:1px solid #3b4d78;pointer-events:none"></div>
<div class="abs" style="left:6px;top:28px;width:1110px;height:560px;border:1px solid rgba(255,255,255,.55);pointer-events:none"></div>
<div class="abs" style="left:0;top:0;width:1122px;height:594px;border:1px solid #2b2f3a;border-radius:7px;pointer-events:none;box-shadow:inset 0 0 0 1px rgba(255,255,255,.5)"></div>
<div class="abs" style="left:0;top:592px;width:1122px;height:2px;background:#1f2d4d"></div>
</div>
</body>
</html>
